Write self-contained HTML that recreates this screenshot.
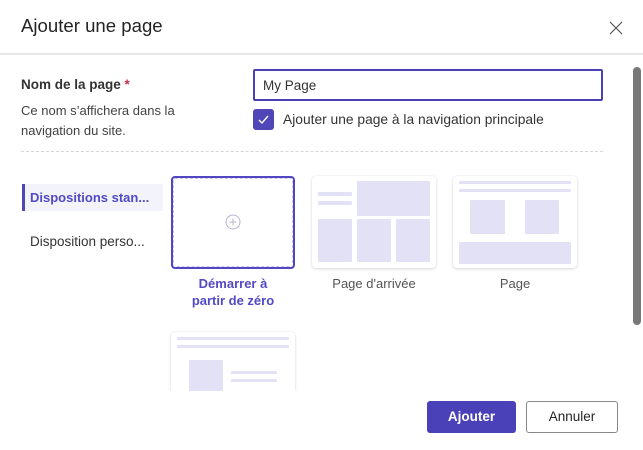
<!DOCTYPE html>
<html><head><style>
*{margin:0;padding:0;box-sizing:border-box}
body{width:643px;height:450px;background:#fff;font-family:"Liberation Sans",sans-serif;position:relative;overflow:hidden;color:#242424}
.a{position:absolute}
.card{position:absolute;background:#fff;border-radius:4px;box-shadow:0 1px 3px rgba(0,0,0,.15),0 0 1px rgba(0,0,0,.1)}
.b{position:absolute;background:#e3e1f5;border-radius:1px}
</style></head><body>
<div class="a" style="left:21px;top:15px;font-size:18.6px;color:#242424">Ajouter une page</div>
<svg class="a" style="left:609px;top:21px" width="14" height="14" viewBox="0 0 14 14"><path d="M1 1L13 13M13 1L1 13" stroke="#555" stroke-width="1.2"/></svg>
<div class="a" style="left:0;top:53px;width:643px;height:2px;background:#e6e6e6"></div>
<div class="a" style="left:633px;top:67px;width:8px;height:258px;background:#787878;border-radius:4px"></div>

<div class="a" style="left:21px;top:77px;font-size:13.5px;font-weight:bold;color:#333">Nom de la page <span style="color:#c4314b">*</span></div>
<div class="a" style="left:21px;top:101px;font-size:13px;line-height:20px;color:#424242;width:200px">Ce nom s’affichera dans la navigation du site.</div>
<div class="a" style="left:253px;top:69px;width:350px;height:32px;border:2px solid #4a41b8;border-radius:2px;font-size:13.5px;padding:7px 8px;color:#333">My Page</div>
<div class="a" style="left:253px;top:109px;width:21px;height:21px;background:#4f46b8;border-radius:3px"></div>
<svg class="a" style="left:257px;top:113px" width="13" height="13" viewBox="0 0 13 13"><path d="M2 7L5 10L11 3" stroke="#fff" stroke-width="1.4" fill="none"/></svg>
<div class="a" style="left:283px;top:112px;font-size:13.8px;color:#333">Ajouter une page à la navigation principale</div>
<div class="a" style="left:21px;top:151px;width:582px;border-top:1px dashed #d6d6d6"></div>

<div class="a" style="left:22px;top:184px;width:141px;height:27px;background:#f3f3fb;border-left:3px solid #4f46b8"></div>
<div class="a" style="left:30px;top:190px;font-size:13px;font-weight:bold;color:#5249c4">Dispositions stan...</div>
<div class="a" style="left:30px;top:234px;font-size:13.5px;color:#333">Disposition perso...</div>

<div class="a" style="left:171px;top:176px;width:124px;height:93px;border:2px solid #5147c3;border-radius:4px;outline:1px dashed #c9c6ee;outline-offset:-3px"></div>
<svg class="a" style="left:225px;top:214px" width="16" height="16" viewBox="0 0 16 16"><circle cx="8" cy="8" r="7" stroke="#b7b4cf" fill="none"/><path d="M8 4.5V11.5M4.5 8H11.5" stroke="#b7b4cf"/></svg>
<div class="a" style="left:171px;top:275px;width:124px;text-align:center;font-size:13px;line-height:17px;color:#5249c4;font-weight:bold">Démarrer à<br>partir de zéro</div>

<div class="card" style="left:312px;top:176px;width:124px;height:92px"></div>
<div class="b" style="left:318px;top:192px;width:34px;height:4px"></div>
<div class="b" style="left:318px;top:201px;width:34px;height:4px"></div>
<div class="b" style="left:357px;top:181px;width:73px;height:35px"></div>
<div class="b" style="left:318px;top:219px;width:34px;height:43px"></div>
<div class="b" style="left:357px;top:219px;width:34px;height:43px"></div>
<div class="b" style="left:396px;top:219px;width:34px;height:43px"></div>
<div class="a" style="left:312px;top:276px;width:124px;text-align:center;font-size:13px;color:#555">Page d'arrivée</div>

<div class="card" style="left:453px;top:176px;width:124px;height:92px"></div>
<div class="b" style="left:459px;top:181px;width:112px;height:3px"></div>
<div class="b" style="left:459px;top:189px;width:112px;height:3px"></div>
<div class="b" style="left:470px;top:200px;width:35px;height:34px"></div>
<div class="b" style="left:525px;top:200px;width:34px;height:34px"></div>
<div class="b" style="left:459px;top:242px;width:112px;height:22px"></div>
<div class="a" style="left:453px;top:276px;width:124px;text-align:center;font-size:13px;color:#555">Page</div>

<div class="a" style="left:160px;top:320px;width:150px;height:71px;overflow:hidden">
<div class="card" style="left:11px;top:12px;width:124px;height:92px"></div>
<div class="b" style="left:17px;top:17px;width:112px;height:3px"></div>
<div class="b" style="left:17px;top:25px;width:112px;height:3px"></div>
<div class="b" style="left:29px;top:40px;width:34px;height:40px"></div>
<div class="b" style="left:71px;top:51px;width:46px;height:3px"></div>
<div class="b" style="left:71px;top:59px;width:46px;height:3px"></div>
</div>

<div class="a" style="left:427px;top:401px;width:89px;height:32px;background:#4a41b8;border-radius:3px;color:#fff;font-weight:bold;font-size:13.5px;text-align:center;line-height:32px">Ajouter</div>
<div class="a" style="left:526px;top:401px;width:92px;height:32px;border:1px solid #888;border-radius:3px;color:#242424;font-size:13.5px;text-align:center;line-height:30px">Annuler</div>
</body></html>
